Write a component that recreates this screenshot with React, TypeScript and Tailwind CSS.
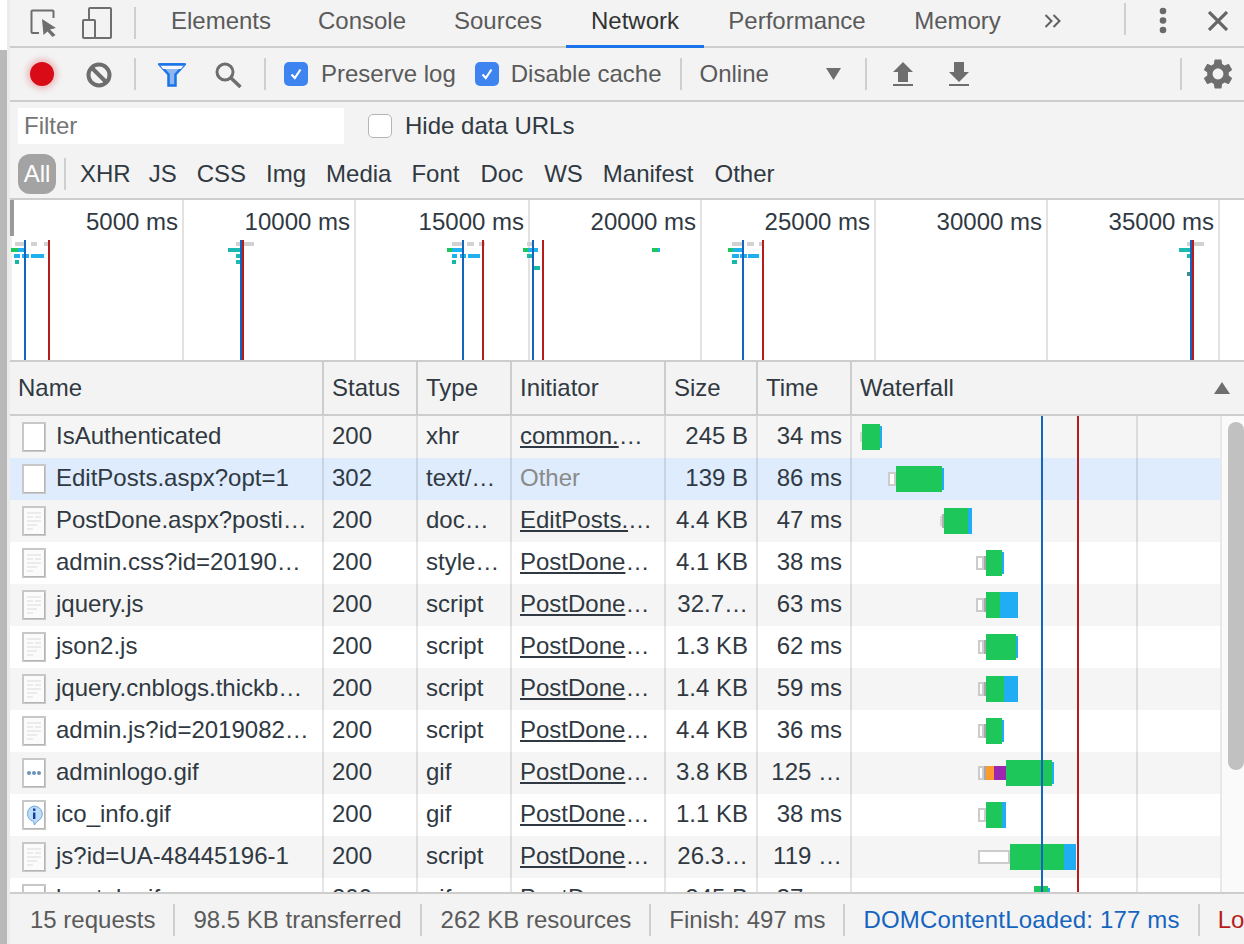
import { MdSettings } from 'react-icons/md'

type IconKind = 'blank' | 'doc' | 'dots' | 'info'

type Req = {
  icon: IconKind
  name: string
  status: string
  type: string
  init: string
  more: boolean
  size: string
  time: string
}

const REQUESTS: Req[] = [
  { icon: 'blank', name: 'IsAuthenticated', status: '200', type: 'xhr', init: 'common.', more: true, size: '245 B', time: '34 ms' },
  { icon: 'blank', name: 'EditPosts.aspx?opt=1', status: '302', type: 'text/…', init: 'Other', more: false, size: '139 B', time: '86 ms' },
  { icon: 'doc', name: 'PostDone.aspx?posti…', status: '200', type: 'doc…', init: 'EditPosts.', more: true, size: '4.4 KB', time: '47 ms' },
  { icon: 'doc', name: 'admin.css?id=20190…', status: '200', type: 'style…', init: 'PostDone', more: true, size: '4.1 KB', time: '38 ms' },
  { icon: 'doc', name: 'jquery.js', status: '200', type: 'script', init: 'PostDone', more: true, size: '32.7…', time: '63 ms' },
  { icon: 'doc', name: 'json2.js', status: '200', type: 'script', init: 'PostDone', more: true, size: '1.3 KB', time: '62 ms' },
  { icon: 'doc', name: 'jquery.cnblogs.thickb…', status: '200', type: 'script', init: 'PostDone', more: true, size: '1.4 KB', time: '59 ms' },
  { icon: 'doc', name: 'admin.js?id=2019082…', status: '200', type: 'script', init: 'PostDone', more: true, size: '4.4 KB', time: '36 ms' },
  { icon: 'dots', name: 'adminlogo.gif', status: '200', type: 'gif', init: 'PostDone', more: true, size: '3.8 KB', time: '125 …' },
  { icon: 'info', name: 'ico_info.gif', status: '200', type: 'gif', init: 'PostDone', more: true, size: '1.1 KB', time: '38 ms' },
  { icon: 'doc', name: 'js?id=UA-48445196-1', status: '200', type: 'script', init: 'PostDone', more: true, size: '26.3…', time: '119 …' },
  { icon: 'blank', name: 'beatok.gif', status: '200', type: 'gif', init: 'PostDone', more: true, size: '245 B', time: '37 ms' },
]

const GREEN = '#1ec75a'
const SKY = '#1fadf3'
const COLS = 'grid grid-cols-[314px_94px_94px_154px_92px_94px_1fr]'

// x, y, w, h, fill in page pixels (the waterfall svg's viewBox uses the same numbers)
const WATERFALL: [number, number, number, number, string][] = [
  [860, 432, 2, 10, '#d6d6d6'], [862, 424, 18, 26, GREEN], [880, 426, 2, 22, SKY],
  [888, 472, 8, 14, '#cccccc'], [890, 474, 4, 10, '#ffffff'], [896, 466, 46, 26, GREEN], [942, 468, 2, 22, SKY],
  [942, 514, 2, 14, '#b0b0b0'], [940, 516, 2, 10, '#d6d6d6'], [944, 508, 24, 26, GREEN], [968, 508, 4, 26, SKY],
  [976, 556, 8, 14, '#cccccc'], [978, 558, 4, 10, '#ffffff'], [984, 556, 2, 14, '#a8a8a8'], [986, 550, 16, 26, GREEN], [1002, 552, 2, 22, SKY],
  [976, 598, 8, 14, '#cccccc'], [978, 600, 4, 10, '#ffffff'], [984, 598, 2, 14, '#a8a8a8'], [986, 592, 14, 26, GREEN], [1000, 592, 18, 26, SKY],
  [978, 640, 6, 14, '#cccccc'], [980, 642, 2, 10, '#ffffff'], [984, 640, 2, 14, '#a8a8a8'], [986, 634, 30, 26, GREEN], [1016, 636, 2, 22, SKY],
  [978, 682, 6, 14, '#cccccc'], [980, 684, 2, 10, '#ffffff'], [984, 682, 2, 14, '#a8a8a8'], [986, 676, 18, 26, GREEN], [1004, 676, 14, 26, SKY],
  [978, 724, 6, 14, '#cccccc'], [980, 726, 2, 10, '#ffffff'], [984, 724, 2, 14, '#a8a8a8'], [986, 718, 16, 26, GREEN], [1002, 720, 2, 22, SKY],
  [978, 766, 6, 14, '#cccccc'], [980, 768, 2, 10, '#ffffff'], [984, 766, 2, 14, '#a8a8a8'], [986, 766, 8, 14, '#ff9a2e'], [994, 766, 12, 14, '#9c27b0'], [1006, 760, 46, 26, GREEN], [1052, 762, 2, 22, SKY],
  [978, 808, 8, 14, '#cccccc'], [980, 810, 4, 10, '#ffffff'], [986, 802, 16, 26, GREEN], [1002, 802, 4, 26, SKY],
  [978, 850, 32, 14, '#cccccc'], [980, 852, 28, 10, '#ffffff'], [1010, 844, 54, 26, GREEN], [1064, 844, 12, 26, SKY],
  [1034, 886, 14, 26, GREEN], [1048, 888, 2, 22, SKY],
]

const GRAY_MARK = '#d2d2d2'
const CYAN_MARK = '#1fb0f0'

const OVERVIEW: [number, number, number, number, string][] = [
  [15, 242, 9, 4, GRAY_MARK], [31, 242, 6, 4, GRAY_MARK], [44, 242, 5, 4, GRAY_MARK],
  [11, 248, 7, 4, GREEN], [18, 248, 7, 4, CYAN_MARK],
  [14, 254, 6, 4, CYAN_MARK], [22, 254, 7, 4, CYAN_MARK], [31, 254, 13, 4, CYAN_MARK], [15, 260, 4, 4, '#14b8a6'],
  [236, 242, 18, 4, GRAY_MARK], [228, 248, 12, 4, '#1cb9b0'], [236, 254, 4, 4, '#1cb9b0'], [236, 260, 4, 4, '#1cb9b0'],
  [452, 242, 10, 4, GRAY_MARK], [467, 242, 7, 4, GRAY_MARK], [479, 242, 6, 4, GRAY_MARK],
  [447, 248, 5, 4, GREEN], [452, 248, 10, 4, CYAN_MARK],
  [452, 254, 5, 4, CYAN_MARK], [460, 254, 6, 4, CYAN_MARK], [468, 254, 12, 4, CYAN_MARK], [452, 260, 4, 4, '#14b8a6'],
  [527, 242, 5, 4, GRAY_MARK], [523, 248, 5, 4, GREEN], [528, 248, 10, 4, CYAN_MARK], [527, 254, 5, 4, '#1cb9b0'], [534, 266, 6, 4, '#14b8a6'],
  [652, 248, 6, 4, GREEN], [658, 248, 2, 4, CYAN_MARK],
  [732, 242, 10, 4, GRAY_MARK], [747, 242, 7, 4, GRAY_MARK], [759, 242, 4, 4, GRAY_MARK],
  [728, 248, 5, 4, GREEN], [733, 248, 9, 4, CYAN_MARK],
  [732, 254, 7, 4, CYAN_MARK], [740, 254, 7, 4, CYAN_MARK], [748, 254, 11, 4, CYAN_MARK], [732, 260, 5, 4, '#14b8a6'],
  [1187, 242, 17, 4, GRAY_MARK], [1179, 248, 11, 4, '#1cb9b0'], [1187, 254, 4, 4, '#1cb9b0'], [1187, 272, 4, 4, '#3f8f88'],
  // load markers
  [24, 240, 2, 120, '#1565c0'], [48, 240, 2, 120, '#b71c1c'],
  [240, 240, 2, 120, '#1565c0'], [242, 240, 2, 120, '#b71c1c'],
  [462, 240, 2, 120, '#1565c0'], [482, 240, 2, 120, '#b71c1c'],
  [532, 240, 2, 120, '#1565c0'], [542, 240, 2, 120, '#b71c1c'],
  [742, 240, 2, 120, '#1565c0'], [762, 240, 2, 120, '#b71c1c'],
  [1190, 240, 2, 120, '#1565c0'], [1192, 240, 2, 120, '#b71c1c'],
]

const TICKS = [
  { label: '5000 ms', w: 'w-[174px]' },
  { label: '10000 ms', w: 'w-[172px]' },
  { label: '15000 ms', w: 'w-[174px]' },
  { label: '20000 ms', w: 'w-[172px]' },
  { label: '25000 ms', w: 'w-[174px]' },
  { label: '30000 ms', w: 'w-[172px]' },
  { label: '35000 ms', w: 'w-[172px]' },
]

const TABS = [
  { label: 'Elements', w: 'w-[146px]' },
  { label: 'Console', w: 'w-[136px]' },
  { label: 'Sources', w: 'w-[136px]' },
  { label: 'Network', w: 'w-[138px]', active: true },
  { label: 'Performance', w: 'w-[186px]' },
  { label: 'Memory', w: 'w-[135px]' },
]

const TYPES = [
  { label: 'XHR', cls: '-mr-[2px]' },
  { label: 'JS', cls: '' },
  { label: 'CSS', cls: '' },
  { label: 'Img', cls: '' },
  { label: 'Media', cls: '' },
  { label: 'Font', cls: '' },
  { label: 'Doc', cls: 'ml-[1px]' },
  { label: 'WS', cls: 'ml-[1px]' },
  { label: 'Manifest', cls: '' },
  { label: 'Other', cls: 'ml-[1px]' },
]

function Divider({ className = '' }: { className?: string }) {
  return <div className={`w-[2px] h-[32px] shrink-0 bg-[#cfcfcf] ${className}`} />
}

function Check({ className = '' }: { className?: string }) {
  return (
    <span className={`w-[24px] h-[24px] shrink-0 rounded-[5px] bg-[#3d84f0] flex items-center justify-center ${className}`}>
      <svg width="14" height="14" viewBox="0 0 14 14" fill="none" stroke="white" strokeWidth="2.2">
        <path d="M2.5 7.5 L5.8 11 L11.5 2.5" />
      </svg>
    </span>
  )
}

function FileIcon({ kind }: { kind: IconKind }) {
  return (
    <svg width="24" height="30" viewBox="0 0 24 30" className="shrink-0">
      <rect x="1" y="1" width="22" height="28" fill={kind === 'doc' ? '#fbfbfb' : 'white'} stroke="#c8c8c8" strokeWidth="2" />
      <path d="M2.500 28.500 H22.500 V2.500" fill="none" stroke="#b4b4b4" strokeWidth="1" />
      {kind === 'doc' && (
        <g fill="#ebebeb">
          <rect x="5" y="6" width="14" height="2" />
          <rect x="5" y="10" width="6" height="2" />
          <rect x="13" y="10" width="6" height="2" />
          <rect x="5" y="14" width="14" height="2" />
          <rect x="5" y="18" width="10" height="2" />
          <rect x="5" y="22" width="6" height="2" />
        </g>
      )}
      {kind === 'dots' && (
        <g fill="#6a93b8">
          <circle cx="7" cy="15" r="2" />
          <circle cx="12" cy="15" r="2" />
          <circle cx="17" cy="15" r="2" />
        </g>
      )}
      {kind === 'info' && (
        <g>
          <path d="M12 6a8.500 8 0 0 1 3 15.400L12.500 25l-1-3.600A8.500 8 0 0 1 12 6z" fill="#bcdcf8" stroke="#6fa4dc" strokeWidth="1" />
          <rect x="11" y="8.500" width="2.400" height="2.400" fill="#123f9c" />
          <rect x="11" y="12.500" width="2.400" height="6.500" fill="#123f9c" />
        </g>
      )}
    </svg>
  )
}

function TabBar() {
  return (
    <div className="h-[48px] shrink-0 flex items-center border-b-2 border-[#cdcdcd] text-[#5a5a5a]">
      <svg width="28" height="28" viewBox="0 0 28 28" className="ml-[20px] shrink-0" fill="none">
        <path d="M9 24H2.500a1 1 0 0 1-1-1V2.500a1 1 0 0 1 1-1H22.500a1 1 0 0 1 1 1V9" stroke="#6e6e6e" strokeWidth="2" />
        <path d="M12 10 L26 19 L20 20.500 L25.500 26 L22.500 28 L17.500 22.500 L13.500 26 Z" fill="#6e6e6e" />
      </svg>
      <svg width="30" height="32" viewBox="0 0 30 32" className="ml-[24px] shrink-0" fill="none">
        <path d="M7 12V2a1 1 0 0 1 1-1H28a1 1 0 0 1 1 1V30a1 1 0 0 1-1 1H13" stroke="#6e6e6e" strokeWidth="2" />
        <rect x="1" y="13" width="12" height="18" rx="1" stroke="#6e6e6e" strokeWidth="2" />
      </svg>
      <Divider className="ml-[22px]" />
      <div className="ml-3 flex items-stretch h-[48px] self-start">
        {TABS.map((t) =>
          t.active ? (
            <div key={t.label} className={`${t.w} flex items-center justify-center pb-[3px] text-[#333333] border-b-[3px] border-[#1a73e8]`}>
              {t.label}
            </div>
          ) : (
            <div key={t.label} className={`${t.w} flex items-center justify-center pb-[6px]`}>
              {t.label}
            </div>
          ),
        )}
      </div>
      <svg width="18" height="14" viewBox="0 0 18 14" className="ml-[19px] shrink-0 -mt-1" fill="none" stroke="#5f5f5f" strokeWidth="2">
        <path d="M1.500 1 L7.500 7 L1.500 13" />
        <path d="M9.500 1 L15.500 7 L9.500 13" />
      </svg>
      <Divider className="ml-[62px] -mt-2" />
      <svg width="8" height="28" viewBox="0 0 8 28" className="ml-[33px] shrink-0 -mt-1" fill="#6a6a6a">
        <circle cx="4" cy="4" r="3.300" />
        <circle cx="4" cy="13.500" r="3.300" />
        <circle cx="4" cy="23" r="3.300" />
      </svg>
      <svg width="20" height="20" viewBox="0 0 20 20" className="ml-[41px] shrink-0 -mt-1" fill="none" stroke="#666666" strokeWidth="3.200">
        <path d="M1 1 L19 19 M19 1 L1 19" />
      </svg>
    </div>
  )
}

function Toolbar() {
  return (
    <div className="h-[54px] shrink-0 flex items-center border-b-2 border-[#cdcdcd] text-[#5a5a5a]">
      <div className="ml-[20px] w-[24px] h-[24px] shrink-0 rounded-full bg-[#d90b17] shadow-[0_0_6px_3px_rgba(217,11,23,0.25)]" />
      <svg width="26" height="26" viewBox="0 0 26 26" className="ml-[32px] mt-[2px] shrink-0" fill="none" stroke="#6e6e6e" strokeWidth="4">
        <circle cx="13" cy="13" r="10.500" />
        <path d="M5.500 5.500 L20.500 20.500" />
      </svg>
      <Divider className="ml-[22px]" />
      <svg width="28" height="24" viewBox="0 0 28 24" className="ml-[22px] mt-[2px] shrink-0">
        <path d="M1.500 1.500 H26.500 L17.500 11.500 V22.500 H10.500 V11.500 Z" fill="#8db7ee" stroke="#1a73e8" strokeWidth="2.500" />
        <path d="M1.500 1.500 H26.500 L23 6 H5 Z" fill="#f4f8fe" />
        <path d="M1.500 1.500 H26.500" stroke="#1a73e8" strokeWidth="2.500" />
      </svg>
      <svg width="28" height="26" viewBox="0 0 28 26" className="ml-[28px] mt-[2px] shrink-0" fill="none" stroke="#6e6e6e">
        <circle cx="11" cy="10" r="8" strokeWidth="3" />
        <path d="M17 16 L26.500 25" strokeWidth="3.500" />
      </svg>
      <Divider className="ml-[22px]" />
      <Check className="ml-[18px]" />
      <span className="ml-[13px] whitespace-nowrap">Preserve log</span>
      <Check className="ml-[19px]" />
      <span className="ml-3 whitespace-nowrap">Disable cache</span>
      <Divider className="ml-[19px]" />
      <span className="ml-[17px]">Online</span>
      <svg width="15" height="12" viewBox="0 0 15 12" className="ml-[57px] shrink-0" fill="#6e6e6e">
        <path d="M0 0 H15 L7.500 12 Z" />
      </svg>
      <Divider className="ml-[24px]" />
      <svg width="20" height="24" viewBox="0 0 20 24" className="ml-[26px] shrink-0" fill="#6e6e6e">
        <path d="M10 0 L20 10 H15 V20 H5 V10 H0 Z" />
        <rect x="0" y="22" width="20" height="2" />
      </svg>
      <svg width="20" height="24" viewBox="0 0 20 24" className="ml-[36px] shrink-0" fill="#6e6e6e">
        <path d="M5 0 H15 V10 H20 L10 20 L0 10 H5 Z" />
        <rect x="0" y="22" width="20" height="2" />
      </svg>
      <Divider className="ml-auto" />
      <MdSettings className="ml-[18px] mr-[8px] shrink-0 text-[#6e6e6e]" size={36} />
    </div>
  )
}

function FilterBar() {
  return (
    <div className="h-[98px] shrink-0 border-b-2 border-[#cdcdcd] text-[#303942]">
      <div className="h-[50px] flex items-center pb-[2px]">
        <div className="ml-2 w-[326px] h-[36px] bg-white pl-[6px] flex items-center text-[#757575]">Filter</div>
        <span className="ml-6 w-[24px] h-[24px] rounded-[5px] bg-white border border-[#b5b5b5]" />
        <span className="ml-[13px]">Hide data URLs</span>
      </div>
      <div className="h-[46px] flex items-center pb-[2px]">
        <span className="ml-2 w-[38px] h-[40px] rounded-[12px] bg-[#a3a3a3] text-white flex items-center justify-center">All</span>
        <Divider className="ml-2" />
        <div className="ml-[14px] flex gap-5">
          {TYPES.map((t) => (
            <span key={t.label} className={t.cls}>{t.label}</span>
          ))}
        </div>
      </div>
    </div>
  )
}

function Overview() {
  return (
    <div className="relative h-[162px] shrink-0 bg-white border-b-2 border-[#cdcdcd] flex text-[#303942]">
      {TICKS.map((t) => (
        <div key={t.label} className={`${t.w} shrink-0 border-r-2 border-[#e2e2e2] text-right pr-1 pt-[10px]`}>
          {t.label}
        </div>
      ))}
      <svg className="absolute left-0 top-0 pointer-events-none" width="1234" height="160" viewBox="10 200 1234 160">
        <rect x="10" y="200" width="4" height="36" fill="#9a9a9a" />
        <rect x="10" y="236" width="2" height="124" fill="#f0f0f0" />
        {OVERVIEW.map(([x, y, w, h, fill], i) => (
          <rect key={i} x={x} y={y} width={w} height={h} fill={fill} />
        ))}
      </svg>
    </div>
  )
}

function HeaderRow() {
  const cell = 'border-r-2 border-[#cdcdcd] px-2 flex items-center'
  return (
    <div className={`${COLS} h-[54px] shrink-0 bg-[#f3f3f3] border-b-2 border-[#cdcdcd] text-[#303942]`}>
      <div className={cell}>Name</div>
      <div className={cell}>Status</div>
      <div className={cell}>Type</div>
      <div className={cell}>Initiator</div>
      <div className={cell}>Size</div>
      <div className={cell}>Time</div>
      <div className="px-2 flex items-center justify-between pr-[14px]">
        Waterfall
        <svg width="16" height="12" viewBox="0 0 16 12" fill="#6e6e6e">
          <path d="M8 0 L16 12 H0 Z" />
        </svg>
      </div>
    </div>
  )
}

function RequestRow({ req, index }: { req: Req; index: number }) {
  const bg = index === 1 ? 'bg-[#deecfd]' : index % 2 === 0 ? 'bg-[#f5f5f5]' : 'bg-white'
  const cell = 'border-r-2 border-black/10 px-2 flex items-center whitespace-nowrap overflow-hidden'
  const text = `${cell} pb-[2px]`
  return (
    <div className={`${COLS} h-[42px] shrink-0 ${bg}`}>
      <div className={`${cell} pl-3 gap-[10px]`}>
        <FileIcon kind={req.icon} />
        <span className="pb-[2px]">{req.name}</span>
      </div>
      <div className={text}>{req.status}</div>
      <div className={text}>{req.type}</div>
      <div className={text}>
        {req.more ? (
          <>
            <span className="underline underline-offset-2">{req.init}</span>…
          </>
        ) : (
          <span className="text-[#8a8a8a]">{req.init}</span>
        )}
      </div>
      <div className={`${text} justify-end`}>{req.size}</div>
      <div className={`${text} justify-end`}>{req.time}</div>
      <div />
    </div>
  )
}

function RequestTable() {
  return (
    <div className="flex h-[476px] shrink-0 text-[#303942]">
      <div className="relative w-[1210px] shrink-0 overflow-hidden flex flex-col border-r-2 border-[#e8e8e8] box-content">
        {REQUESTS.map((r, i) => (
          <RequestRow key={r.name} req={r} index={i} />
        ))}
        <svg className="absolute left-[842px] top-0 pointer-events-none" width="368" height="476" viewBox="852 416 368 476">
          <rect x="1136" y="416" width="2" height="476" fill="rgba(0,0,0,0.1)" />
          {WATERFALL.map(([x, y, w, h, fill], i) => (
            <rect key={i} x={x} y={y} width={w} height={h} fill={fill} />
          ))}
          <rect x="1041" y="416" width="2" height="476" fill="#1565c0" />
          <rect x="1077" y="416" width="2" height="476" fill="#b71c1c" />
        </svg>
      </div>
      <div className="flex-1 bg-[#fafafa] pl-[6px] pt-[6px]">
        <div className="w-full h-[348px] rounded-full bg-[#c1c1c1]" />
      </div>
    </div>
  )
}

function StatusBar() {
  return (
    <div className="h-[52px] shrink-0 bg-[#f3f3f3] border-t-2 border-[#cdcdcd] flex items-center pl-5 pt-[2px] whitespace-nowrap text-[#5a5a5a] overflow-hidden">
      <span>15 requests</span>
      <Divider className="mx-[18px]" />
      <span>98.5 KB transferred</span>
      <Divider className="ml-[18px] mr-[19px]" />
      <span>262 KB resources</span>
      <Divider className="mx-[18px]" />
      <span>Finish: 497 ms</span>
      <Divider className="mx-[18px]" />
      <span className="text-[#1565c0] tracking-[0.17px]">DOMContentLoaded: 177 ms</span>
      <Divider className="mx-[18px]" />
      <span className="text-[#b71c1c]">Load: 497 ms</span>
    </div>
  )
}

export default function App() {
  return (
    <div className="w-[1244px] h-[944px] flex overflow-hidden bg-[#f3f3f3] text-[24px] leading-none font-['Liberation_Sans',Arial,sans-serif]">
      <div className="w-[10px] shrink-0 flex flex-col border-r-[3px] border-[#ececec]">
        <div className="h-[50px] bg-white" />
        <div className="flex-1 bg-[#b9b9b9]" />
      </div>
      <div className="flex-1 min-w-0 flex flex-col">
        <TabBar />
        <Toolbar />
        <FilterBar />
        <Overview />
        <HeaderRow />
        <RequestTable />
        <StatusBar />
      </div>
    </div>
  )
}
